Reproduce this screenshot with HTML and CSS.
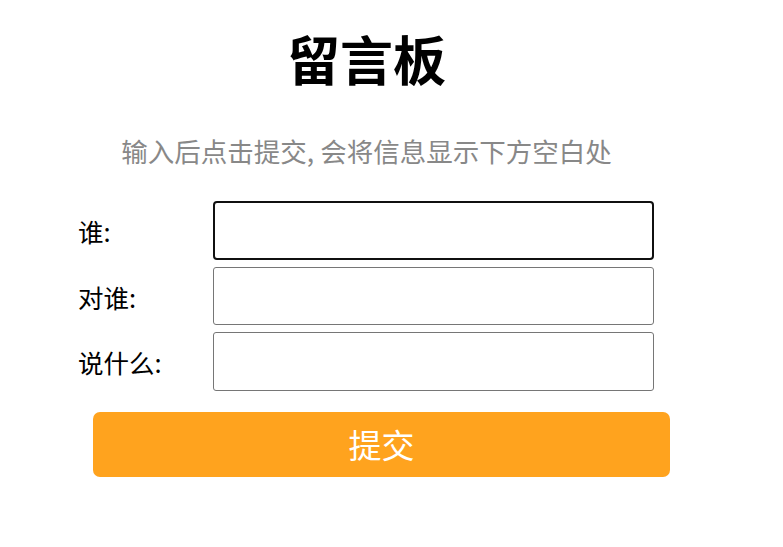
FILE: index.html
```html
<!DOCTYPE html>
<html lang="zh">
<head>
<meta charset="utf-8">
<link rel="stylesheet" href="styles.css">
</head>
<body>
<div class="page">
  <h1 class="title">留言板</h1>
  <p class="hint">输入后点击提交, 会将信息显示下方空白处</p>
  <div class="form">
    <div class="row"><label class="label">谁:</label><input class="field focused" type="text"></div>
    <div class="row"><label class="label">对谁:</label><input class="field" type="text"></div>
    <div class="row"><label class="label">说什么:</label><input class="field" type="text"></div>
  </div>
  <button class="submit">提交</button>
</div>
</body>
</html>
```
FILE: styles.css
```css
html, body {
  margin: 0;
  padding: 0;
  background: #fff;
}
body {
  font-family: "Noto Sans CJK SC", "Noto Sans", sans-serif;
  color: #000;
}
.page {
  width: 733px;
  display: flex;
  flex-direction: column;
}
.title {
  margin: 20px 0 0 0;
  font-size: 53px;
  line-height: 76px;
  font-weight: bold;
  text-align: center;
}
.hint {
  margin: 37px 0 0 0;
  font-size: 26.5px;
  line-height: 36px;
  color: #888;
  text-align: center;
}
.form {
  margin-top: 32px;
  padding-left: 78px;
  display: flex;
  flex-direction: column;
  gap: 7px;
}
.row {
  display: flex;
  align-items: center;
}
.label {
  width: 135px;
  font-size: 25.5px;
}
.field {
  box-sizing: border-box;
  width: 441px;
  height: 58.7px;
  margin: 0;
  border: 1px solid #767676;
  border-radius: 3px;
  background: #fff;
  font-size: 20px;
  outline: none;
}
.field.focused {
  border: 2px solid #101010;
  border-radius: 4px;
}
.submit {
  margin: 20.5px 0 0 93px;
  width: 577px;
  height: 65px;
  border: none;
  border-radius: 7px;
  background: #ffa31e;
  color: #fff;
  font-family: "Noto Sans CJK SC", "Noto Sans", sans-serif;
  font-size: 33px;
}
```
